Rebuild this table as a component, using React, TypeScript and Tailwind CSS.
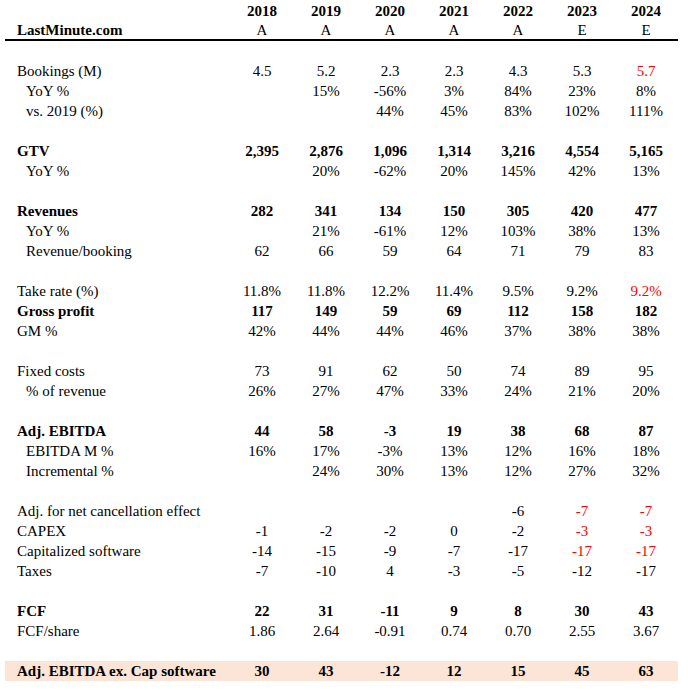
type Row = {
    label?: string;
    values?: (string | [string, "red"])[];
    bold?: boolean;
    indent?: boolean;
    highlight?: boolean;
};

const years = ["2018", "2019", "2020", "2021", "2022", "2023", "2024"];
const kinds = ["A", "A", "A", "A", "A", "E", "E"];

const rows: Row[] = [
    {},
    {label: "Bookings (M)", values: ["4.5", "5.2", "2.3", "2.3", "4.3", "5.3", ["5.7", "red"]]},
    {label: "YoY %", indent: true, values: ["", "15%", "-56%", "3%", "84%", "23%", "8%"]},
    {label: "vs. 2019 (%)", indent: true, values: ["", "", "44%", "45%", "83%", "102%", "111%"]},
    {},
    {label: "GTV", bold: true, values: ["2,395", "2,876", "1,096", "1,314", "3,216", "4,554", "5,165"]},
    {label: "YoY %", indent: true, values: ["", "20%", "-62%", "20%", "145%", "42%", "13%"]},
    {},
    {label: "Revenues", bold: true, values: ["282", "341", "134", "150", "305", "420", "477"]},
    {label: "YoY %", indent: true, values: ["", "21%", "-61%", "12%", "103%", "38%", "13%"]},
    {label: "Revenue/booking", indent: true, values: ["62", "66", "59", "64", "71", "79", "83"]},
    {},
    {label: "Take rate (%)", values: ["11.8%", "11.8%", "12.2%", "11.4%", "9.5%", "9.2%", ["9.2%", "red"]]},
    {label: "Gross profit", bold: true, values: ["117", "149", "59", "69", "112", "158", "182"]},
    {label: "GM %", values: ["42%", "44%", "44%", "46%", "37%", "38%", "38%"]},
    {},
    {label: "Fixed costs", values: ["73", "91", "62", "50", "74", "89", "95"]},
    {label: "% of revenue", indent: true, values: ["26%", "27%", "47%", "33%", "24%", "21%", "20%"]},
    {},
    {label: "Adj. EBITDA", bold: true, values: ["44", "58", "-3", "19", "38", "68", "87"]},
    {label: "EBITDA M %", indent: true, values: ["16%", "17%", "-3%", "13%", "12%", "16%", "18%"]},
    {label: "Incremental %", indent: true, values: ["", "24%", "30%", "13%", "12%", "27%", "32%"]},
    {},
    {label: "Adj. for net cancellation effect", values: ["", "", "", "", "-6", ["-7", "red"], ["-7", "red"]]},
    {label: "CAPEX", values: ["-1", "-2", "-2", "0", "-2", ["-3", "red"], ["-3", "red"]]},
    {label: "Capitalized software", values: ["-14", "-15", "-9", "-7", "-17", ["-17", "red"], ["-17", "red"]]},
    {label: "Taxes", values: ["-7", "-10", "4", "-3", "-5", "-12", "-17"]},
    {},
    {label: "FCF", bold: true, values: ["22", "31", "-11", "9", "8", "30", "43"]},
    {label: "FCF/share", values: ["1.86", "2.64", "-0.91", "0.74", "0.70", "2.55", "3.67"]},
    {},
    {label: "Adj. EBITDA ex. Cap software", bold: true, highlight: true, values: ["30", "43", "-12", "12", "15", "45", "63"]},
];

export default function App() {
    return (
        <div className="w-[688px] h-[690px] bg-white pt-[1px] pl-[5px] text-black text-[15px] leading-[20px] font-['Liberation_Serif','Times_New_Roman',serif]">
            <div className="w-[673px]">
                {/* header */}
                <div className="flex h-[20px] font-bold">
                    <div className="w-[225px]" />
                    {years.map(y => (
                        <div key={y} className="w-[64px] text-center">{y}</div>
                    ))}
                </div>
                <div className="flex h-[20px] border-b-2 border-black">
                    <div className="w-[225px] pl-3 font-bold leading-[19px]">LastMinute.com</div>
                    {kinds.map((k, i) => (
                        <div key={i} className="w-[64px] text-center leading-[19px]">{k}</div>
                    ))}
                </div>

                {/* body */}
                {rows.map((r, i) => (
                    <div
                        key={i}
                        className={`flex h-[20px] ${r.bold ? "font-bold" : ""} ${r.highlight ? "bg-[#fce4d6]" : ""}`}
                    >
                        <div className={`w-[225px] whitespace-nowrap ${r.indent ? "pl-[21px]" : "pl-3"}`}>
                            {r.label}
                        </div>
                        {r.values?.map((v, j) => (
                            Array.isArray(v) ? (
                                <div key={j} className="w-[64px] text-center text-[#ff0000]">{v[0]}</div>
                            ) : (
                                <div key={j} className="w-[64px] text-center">{v}</div>
                            )
                        ))}
                    </div>
                ))}
            </div>
        </div>
    )
}
